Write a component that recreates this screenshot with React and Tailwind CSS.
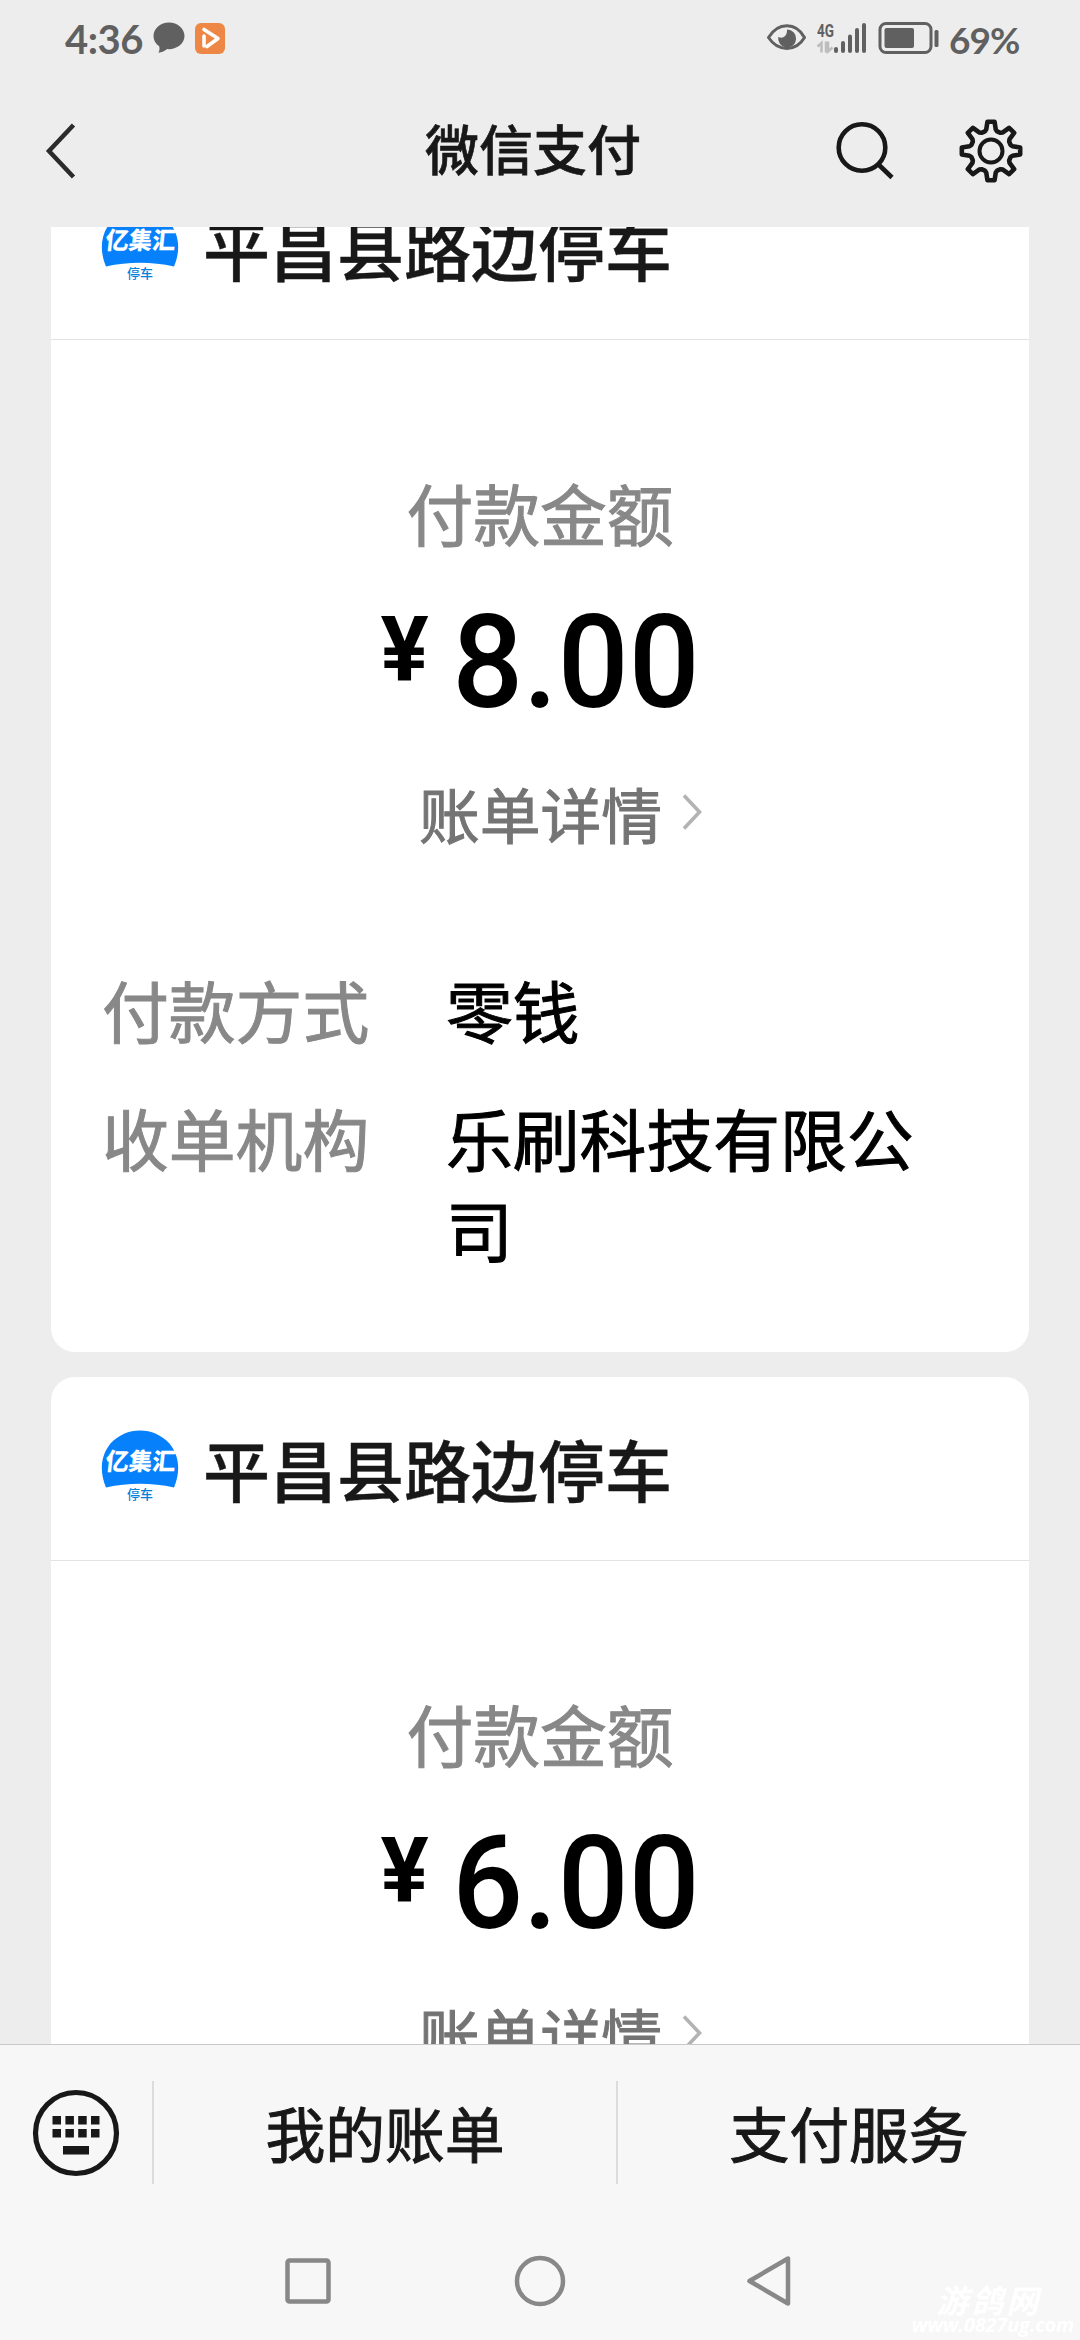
import { clsx } from 'clsx'

const bills = [
  {
    id: 1,
    merchant: '平昌县路边停车',
    amount: '8.00',
    details: [
      { label: '付款方式', value: '零钱' },
      { label: '收单机构', value: '乐刷科技有限公司' },
    ],
  },
  {
    id: 2,
    merchant: '平昌县路边停车',
    amount: '6.00',
    details: [
      { label: '付款方式', value: '零钱' },
      { label: '收单机构', value: '乐刷科技有限公司' },
    ],
  },
]

const menus = ['我的账单', '支付服务']

// Gear outline: eight teeth spread around the centre
function gearPath(cx, cy) {
  const points = []
  for (let i = 0; i < 8; i++) {
    const base = i * 45 - 90
    const teeth = [[-17.5, 20.5], [-12.5, 22], [-7, 29.4], [7, 29.4], [12.5, 22], [17.5, 20.5]]
    teeth.forEach(([deg, r]) => {
      const a = ((base + deg) * Math.PI) / 180
      points.push(`${(cx + r * Math.cos(a)).toFixed(2)} ${(cy + r * Math.sin(a)).toFixed(2)}`)
    })
  }
  return `M${points.join('L')}Z`
}

function StatusBar() {
  return (
    <div className="flex h-[76px] items-center pl-[65px] pr-[60px] text-[#606060]">
      <span className="mt-[2px] w-[88px] whitespace-nowrap font-['Lato'] text-[40px] font-bold leading-none tracking-[-0.5px]">4:36</span>
      <svg width="32" height="32" viewBox="0 0 32 32" fill="#606060">
        <path d="M16 0.5C7.5 0.5 0.5 6.5 0.5 14c0 4.2 2 7.7 5.7 10.2 0.6 2.2 0.4 4.3-0.8 6.6 3.5-0.5 6.5-1.8 8.8-3.7C24 27.8 31.5 21.5 31.5 14 31.5 6.5 24.5 0.5 16 0.5Z" />
      </svg>
      <svg className="ml-[10px]" width="30" height="31" viewBox="0 0 30 31" fill="none">
        <rect width="30" height="31" rx="6" fill="#ee8645" />
        <path d="M9 6.5L23 15.5L12 23.5M9 13V23" stroke="#fff" strokeWidth="3.6" strokeLinecap="round" strokeLinejoin="round" />
      </svg>
      <div className="ml-auto flex items-center">
        <svg width="172" height="34" viewBox="0 0 172 34" fill="none">
          <path d="M1.5 16.5C11 0.8 29 0.8 37.5 16.5C29 31 11 31 1.5 16.5Z" stroke="#606060" strokeWidth="3" strokeLinejoin="round" />
          <path d="M20 8.5a9 9 0 1 1-8.7 7.2c3 2.5 9.2 0.5 8.7-7.2Z" fill="#606060" />
          <text x="50" y="16" fontFamily="Roboto" fontSize="19" fontWeight="700" textLength="17" lengthAdjust="spacingAndGlyphs" fill="#606060">4G</text>
          <path d="M50.5 25.5L54.5 22V31.5M59 20.5V31.5M61 20.5v10l4.5-4" stroke="#bdbdbd" strokeWidth="2.5" />
          <path d="M69 28v2M76 22v8M83 15.5v14.5M90 9v21M97 4v26" stroke="#606060" strokeWidth="4" strokeLinecap="round" />
          <rect x="113" y="2.5" width="51" height="29" rx="6" stroke="#606060" strokeWidth="3" />
          <rect x="117.5" y="7" width="29.5" height="20" rx="2" fill="#606060" />
          <rect x="167.5" y="9" width="4" height="17" rx="1.5" fill="#606060" />
        </svg>
        <span className="ml-[10px] mt-[3px] w-[71px] whitespace-nowrap font-['Lato'] text-[37px] font-bold leading-none tracking-[-1px]">69%</span>
      </div>
    </div>
  )
}

function TitleBar() {
  return (
    <div className="grid h-[151px] grid-cols-3 items-center pb-[2px]">
      <svg className="ml-[44px]" width="34" height="60" viewBox="0 0 34 60" fill="none">
        <path d="M29.5 4L5 30L29.5 56" stroke="#2b2b2d" strokeWidth="4.5" />
      </svg>
      <h1 className="-ml-[14px] -mt-[5px] whitespace-nowrap text-center text-[54px] font-medium leading-none text-[#181818] [-webkit-text-stroke:0.6px]">微信支付</h1>
      <svg className="ml-auto mr-[54px]" width="192" height="70" viewBox="0 0 192 70" fill="none" stroke="#181818">
        <circle cx="28" cy="31.5" r="23.3" strokeWidth="4.6" />
        <path d="M44.5 48.5L58 61.5" strokeWidth="4.6" />
        <path d={gearPath(157, 35)} strokeWidth="4.6" strokeLinejoin="round" />
        <circle cx="157" cy="35" r="11.5" strokeWidth="4" />
      </svg>
    </div>
  )
}

function MerchantLogo() {
  return (
    <svg width="78" height="78" viewBox="0 0 78 78">
      <path d="M5 57.5C-2 41 0 25 9.5 13.5C25-4 53-4 68.5 13.5C78 25 80 41 73 57.5Q39 50 5 57.5Z" fill="#0681fb" />
      <g transform="skewX(-6)" fontFamily="'Noto Sans CJK SC', sans-serif" fontWeight="900">
        <text x="8" y="40" fontSize="24" textLength="70" lengthAdjust="spacingAndGlyphs" fill="#fff">亿集汇</text>
      </g>
      <text x="26" y="69" fontFamily="'Noto Sans CJK SC', sans-serif" fontSize="13" fontWeight="500" fill="#0681d8">停车</text>
    </svg>
  )
}

function BillCard({ bill, className }) {
  return (
    <section className={clsx('w-[978px] shrink-0 rounded-[24px] bg-white', className)}>
      <header className="flex h-[184px] items-center border-b border-[#e3e3e3] pl-[50px]">
        <MerchantLogo />
        <span className="-mt-[3px] ml-[24px] text-[67px] font-medium leading-none text-[#181818] [-webkit-text-stroke:0.4px]">{bill.merchant}</span>
      </header>

      <div className="flex flex-col items-center pt-[126px]">
        <p className="text-[66.8px] leading-[92px] text-[#888888] [-webkit-text-stroke:1px]">付款金额</p>
        <div className="mt-[40px] flex items-start pl-[5px] font-['Roboto'] font-medium leading-none text-black">
          <span className="mt-[8px] text-[90px] font-bold">¥</span>
          <span className="ml-[18px] scale-x-[0.96] text-[130px]">{bill.amount}</span>
        </div>
        <div className="mt-[43px] flex items-center pl-[42px]">
          <span className="text-[60.8px] leading-[84px] text-[#747474] [-webkit-text-stroke:1px]">账单详情</span>
          <svg className="-mt-[3px] ml-[19px]" width="22" height="38" viewBox="0 0 22 38" fill="none">
            <path d="M3 2.5L18.5 19L3 35.5" stroke="#b3b3b3" strokeWidth="3.6" />
          </svg>
        </div>
      </div>

      <dl className="mt-[109px] flex flex-col gap-[37px] px-[51px] text-[66.8px] leading-[91px] [-webkit-text-stroke:1px]">
        {bill.details.map(item => (
          <div key={item.label} className="flex">
            <dt className="w-[344px] shrink-0 text-[#888888]">{item.label}</dt>
            <dd className="flex-1 text-black">{item.value}</dd>
          </div>
        ))}
      </dl>
    </section>
  )
}

function BottomMenu() {
  return (
    <nav className="flex h-[175px] items-center text-[59.8px] text-[#181818] [-webkit-text-stroke:1px]">
      <div className="flex h-[103px] w-[154px] items-center justify-center border-r-2 border-[#dcdcdc]">
        <svg width="88" height="88" viewBox="0 0 88 88" fill="#181818">
          <circle cx="44" cy="44" r="40.5" fill="none" stroke="#181818" strokeWidth="5.2" />
          {[20.5, 33.4, 46.2, 59].map(x => (
            <g key={x}>
              <rect x={x} y="27" width="8.5" height="8.5" />
              <rect x={x} y="40" width="8.5" height="8.5" />
            </g>
          ))}
          <rect x="31" y="57" width="26" height="8.5" />
        </svg>
      </div>
      {menus.map((label, i) => (
        <div
          key={label}
          className={clsx(
            'flex h-[103px] items-center justify-center leading-none',
            i === 0 ? 'w-[464px] border-r-2 border-[#dcdcdc]' : 'flex-1'
          )}
        >
          {label}
        </div>
      ))}
    </nav>
  )
}

function SystemNav() {
  return (
    <div className="flex flex-1 justify-center gap-[176px] pt-[33px]">
      <svg width="56" height="56" viewBox="0 0 56 56" fill="none" stroke="#888888" strokeWidth="4.5">
        <rect x="7.5" y="7.5" width="41" height="41" rx="2" />
      </svg>
      <svg width="56" height="56" viewBox="0 0 56 56" fill="none" stroke="#888888" strokeWidth="4.5">
        <circle cx="28" cy="28" r="23" />
      </svg>
      <svg width="56" height="56" viewBox="0 0 56 56" fill="none" stroke="#888888" strokeWidth="4.5" strokeLinejoin="round">
        <path d="M44 5.5V50.5L5.5 28Z" />
      </svg>
    </div>
  )
}

export default function App() {
  return (
    <div className="relative flex h-[2340px] w-[1080px] flex-col overflow-hidden bg-[#ededed] font-['Noto_Sans_CJK_SC',sans-serif]">
      <StatusBar />
      <TitleBar />

      {/* Message list, scrolled part way through the first card */}
      <main className="flex h-[1817px] flex-col items-center gap-[25px] overflow-hidden">
        {bills.map((bill, i) => (
          <BillCard key={bill.id} bill={bill} className={i === 0 ? '-mt-[71px] h-[1196px]' : 'h-[1196px]'} />
        ))}
      </main>

      <footer className="flex flex-1 flex-col border-t border-[#c8c8c8] bg-[#f7f7f7]">
        <BottomMenu />
        <SystemNav />
      </footer>

      {/* Watermark */}
      <div className="absolute bottom-[5px] right-[6px] flex flex-col items-center italic text-white">
        <span className="-ml-[8px] text-[32px] font-bold leading-[32px] tracking-[3px]">游鸽网</span>
        <span className="font-['Open_Sans'] text-[20px] font-bold leading-[20px] tracking-[-0.2px]">www.0827ug.com</span>
      </div>
    </div>
  )
}
